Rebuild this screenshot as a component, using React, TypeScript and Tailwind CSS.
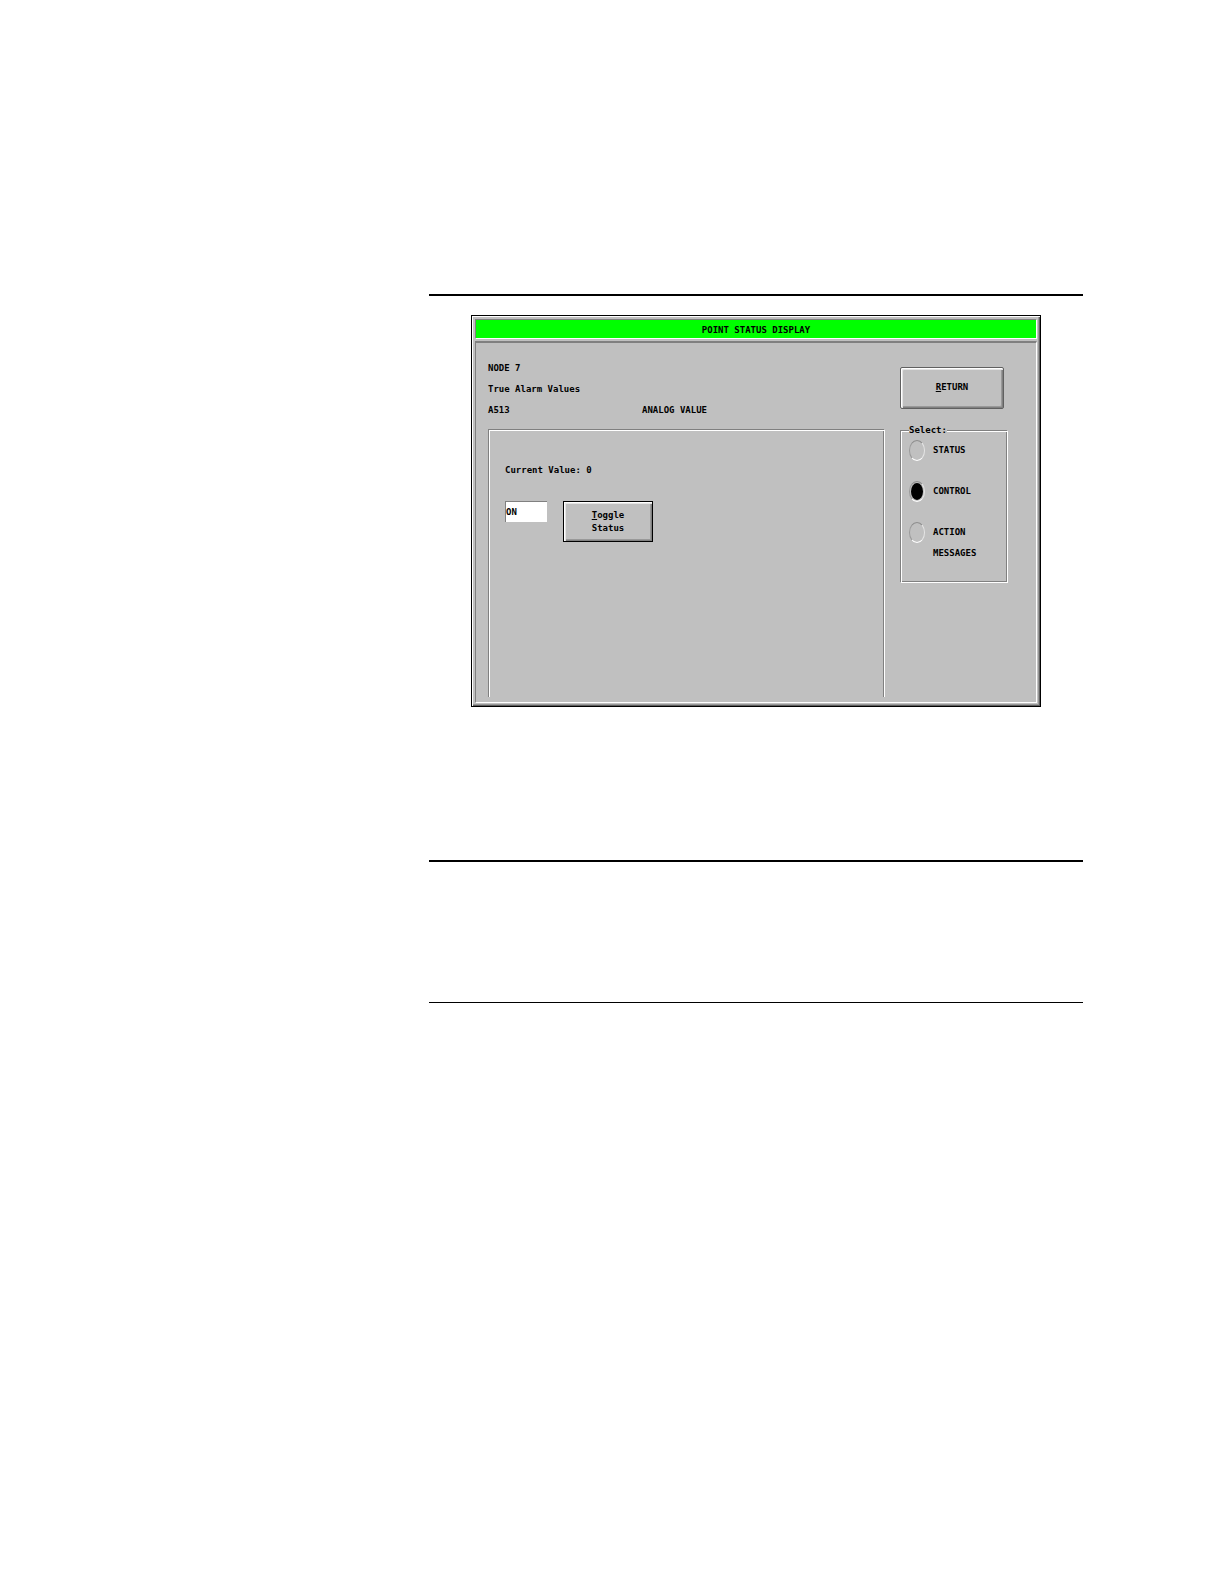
import React, { useState } from 'react';

type View = 'status' | 'control' | 'action';

const VIEWS: { id: View; lines: string[] }[] = [
    { id: 'status', lines: ['STATUS'] },
    { id: 'control', lines: ['CONTROL'] },
    { id: 'action', lines: ['ACTION', 'MESSAGES'] },
];

interface PushButtonProps {
    className: string;
    onClick?: () => void;
    children: React.ReactNode;
}

const PushButton: React.FC<PushButtonProps> = ({ className, onClick, children }) => (
    <button
        type="button"
        onClick={onClick}
        className={`border shadow-[inset_1px_1px_0_#fff,inset_2px_2px_0_#e4e4e4,inset_-1px_-1px_0_#808080,inset_-2px_-2px_0_#999] ${className}`}
    >
        {children}
    </button>
);

const ViewSelector: React.FC = () => {
    const [view, setView] = useState<View>('control');

    return (
        <fieldset className="mt-4 border border-t-[#808080] border-l-[#808080] border-r-white border-b-white pl-2 pb-[18px] shadow-[inset_1px_1px_0_#fff,inset_-1px_-1px_0_#808080]">
            <legend className="bg-[#c0c0c0] leading-[10px]">Select:</legend>
            <div className="flex flex-col gap-5 pt-[5px]">
                {VIEWS.map(({ id, lines }) => (
                    <label key={id} className="flex items-start gap-2 leading-[21px]">
                        <input
                            type="radio"
                            name="view"
                            checked={view === id}
                            onChange={() => setView(id)}
                            className="h-[21px] w-4 shrink-0 appearance-none rounded-[50%] border border-t-[#8c8c8c] border-l-[#9a9a9a] border-r-[#e6e6e6] border-b-white bg-clip-content p-px checked:bg-black"
                        />
                        <span className="flex flex-col">
                            {lines.map(line => <span key={line}>{line}</span>)}
                        </span>
                    </label>
                ))}
            </div>
        </fieldset>
    );
};

const PointStatusWindow: React.FC = () => {
    const [on, setOn] = useState(true);

    return (
        <section className="mx-[42px] mt-[19px] border border-black bg-[#c0c0c0] p-[3px] font-['DejaVu_Sans_Mono',monospace] text-[9px] font-bold text-black shadow-[inset_1px_1px_0_#fff,inset_-1px_-1px_0_#606060,inset_-2px_-2px_0_#999]">
            <h1 className="mb-0.5 h-5 border border-t-[#808080] border-l-[#808080] border-r-white border-b-white bg-[#00ff00] text-center leading-5">
                POINT STATUS DISPLAY
            </h1>

            <div className="flex border border-t-2 border-t-[#808080] border-l-[#808080] border-r-white border-b-white pr-7 pl-3">
                <div className="flex flex-1 flex-col pt-[15px] pb-[5px]">
                    <div className="leading-[21px]">
                        <p>NODE 7</p>
                        <p>True Alarm Values</p>
                        <div className="flex">
                            <p className="w-[154px]">A513</p>
                            <p>ANALOG VALUE</p>
                        </div>
                    </div>

                    <div className="mt-2 min-h-[268px] flex-1 border-x border-t border-t-[#808080] border-l-[#808080] border-r-white pt-[30px] pl-4 shadow-[inset_1px_1px_0_#fff,inset_-1px_0_0_#808080]">
                        <p className="leading-[21px]">Current Value: 0</p>
                        <div className="mt-5 flex items-start gap-4">
                            <input
                                type="text"
                                aria-label="Current status"
                                readOnly
                                value={on ? 'ON' : 'OFF'}
                                className="h-[21px] w-[42px] border-t border-l border-[#808080] bg-white outline-none"
                            />
                            <PushButton className="h-[41px] w-[90px] border-black leading-[13px]" onClick={() => setOn(!on)}>
                                <span className="underline">T</span>oggle
                                <br />
                                Status
                            </PushButton>
                        </div>
                    </div>
                </div>

                <div className="ml-[15px] w-[108px] pt-6">
                    <PushButton className="block h-[42px] w-[104px] rounded-[2px] border-[#606060]">
                        <span className="underline">R</span>ETURN
                    </PushButton>
                    <ViewSelector />
                </div>
            </div>
        </section>
    );
};

const App: React.FC = () => {
    return (
        <div className="min-h-screen bg-white">
            <main className="mr-[141px] ml-[429px] pt-[294px]">
                <hr className="border-t-2 border-black" />
                <PointStatusWindow />
                <hr className="mt-[153px] border-t-2 border-black" />
                <hr className="mt-[140px] border-t border-black" />
            </main>
        </div>
    );
};

export default App;
